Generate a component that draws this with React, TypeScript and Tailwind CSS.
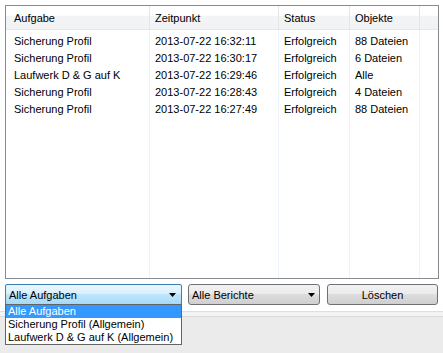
import React from 'react';

const font = { fontFamily: '"Liberation Sans", Arial, sans-serif' };

const rows = [
  ['Sicherung Profil', '2013-07-22 16:32:11', 'Erfolgreich', '88 Dateien'],
  ['Sicherung Profil', '2013-07-22 16:30:17', 'Erfolgreich', '6 Dateien'],
  ['Laufwerk D & G auf K', '2013-07-22 16:29:46', 'Erfolgreich', 'Alle'],
  ['Sicherung Profil', '2013-07-22 16:28:43', 'Erfolgreich', '4 Dateien'],
  ['Sicherung Profil', '2013-07-22 16:27:49', 'Erfolgreich', '88 Dateien'],
];

const cols = 'grid grid-cols-[144px_129px_71px_70px_1fr]';

const Arrow = () => (
  <svg width="7" height="4" viewBox="0 0 7 4" className="shrink-0">
    <polygon points="0,0 7,0 3.5,4" fill="#000" />
  </svg>
);

export default function App() {
  return (
    <div style={font} className="relative w-[443px] h-[353px] bg-[#ebebeb] text-[11px] text-black overflow-hidden flex flex-col">
      <div className="bg-white px-[5px] pt-[5px] h-[312px] border-b border-[#d8e0e9] flex flex-col">
        {/* list view */}
        <div className="h-[274px] border border-[#868a91] flex flex-col w-[434px]">
          <div className={`${cols} h-[24px] border-b border-[#e3e6ea] bg-[linear-gradient(#ffffff_0%,#ffffff_40%,#f3f4f6_45%,#f1f2f4_100%)]`}>
            <div className="pl-[8px] pt-[5px] leading-[14px] border-r border-[#e3e5e8]">Aufgabe</div>
            <div className="pl-[5px] pt-[5px] leading-[14px] border-r border-[#e3e5e8]">Zeitpunkt</div>
            <div className="pl-[5px] pt-[5px] leading-[14px] border-r border-[#e3e5e8]">Status</div>
            <div className="pl-[5px] pt-[5px] leading-[14px] border-r border-[#e3e5e8]">Objekte</div>
            <div />
          </div>
          <div className={`${cols} flex-1`}>
            {[0, 1, 2, 3].map((c) => (
              <div key={c} className="border-r border-[#ecf3fb] pt-[3px]">
                {rows.map((r, i) => (
                  <div key={i} className={`${c === 0 ? 'pl-[8px]' : 'pl-[5px]'} h-[17px] leading-[17px] whitespace-nowrap`}>
                    {r[c]}
                  </div>
                ))}
              </div>
            ))}
            <div />
          </div>
        </div>

        {/* controls */}
        <div className="mt-[5px] flex items-center h-[21px]">
          <div className="w-[177px] h-[21px] border border-[#3c7fb1] rounded-[2px] bg-[linear-gradient(#eaf6fd_0%,#d9f0fc_45%,#bee6fd_50%,#a7d9f5_100%)] flex items-center pl-[3px] pr-[5px]">
            <span className="flex-1 leading-[14px]">Alle Aufgaben</span>
            <Arrow />
          </div>
          <div className="ml-[6px] w-[132px] h-[21px] border border-[#707070] rounded-[3px] bg-[linear-gradient(#f2f2f2_0%,#ebebeb_45%,#dddddd_50%,#cfcfcf_100%)] flex items-center pl-[3px] pr-[4px]">
            <span className="flex-1 leading-[14px]">Alle Berichte</span>
            <Arrow />
          </div>
          <div className="ml-[7px] w-[111px] h-[21px] border border-[#707070] rounded-[3px] bg-[linear-gradient(#f2f2f2_0%,#ebebeb_45%,#dddddd_50%,#cfcfcf_100%)] flex items-center justify-center">
            <span className="leading-[14px]">Löschen</span>
          </div>
        </div>
      </div>
      <div className="h-[5px] bg-[#f4f4f4] border-b border-[#d9d9d9]" />

      {/* open dropdown */}
      <div className="absolute left-[5px] top-[304px] w-[177px] bg-white border border-[#646464] flex flex-col whitespace-nowrap">
        <div className="h-[13px] leading-[13px] bg-[#3399ff] text-white pl-[2px]">Alle Aufgaben</div>
        <div className="h-[13px] leading-[13px] pl-[2px]">Sicherung Profil (Allgemein)</div>
        <div className="h-[13px] leading-[13px] pl-[2px]">Laufwerk D &amp; G auf K (Allgemein)</div>
      </div>
    </div>
  );
}
